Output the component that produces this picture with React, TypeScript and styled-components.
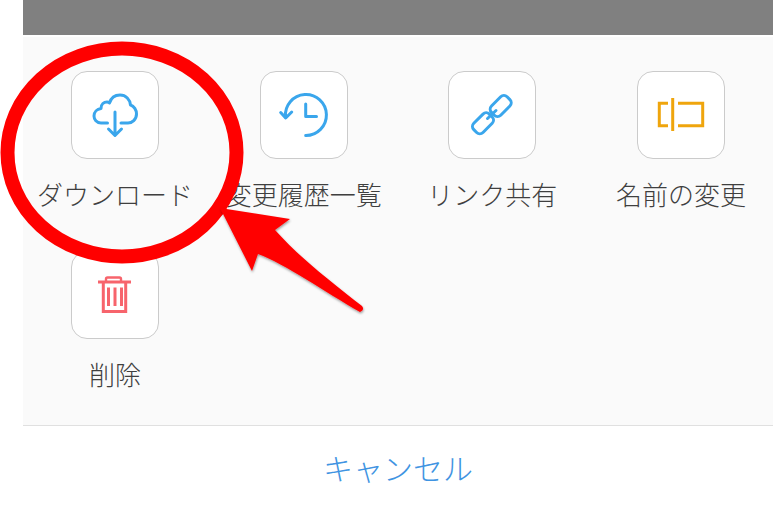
import React from "react";
import styled, { createGlobalStyle } from "styled-components";

const GlobalStyle = createGlobalStyle`
  html, body { margin: 0; padding: 0; background: #ffffff; }
  body { font-family: "Noto Sans CJK JP", "Noto Sans", sans-serif; }
`;

const Page = styled.div`
  position: relative;
  width: 773px;
  height: 505px;
  overflow: hidden;
  padding-left: 23px;
  box-sizing: border-box;
  background: #ffffff;
`;

const TopBar = styled.div`
  height: 35px;
  background: #808080;
  margin-bottom: 2px;
`;

const ActionPanel = styled.div`
  display: grid;
  grid-template-columns: repeat(4, 88px);
  justify-content: space-between;
  row-gap: 36px;
  padding: 34px 48px 30px;
  background: #fafafa;
`;

const Action = styled.div`
  display: flex;
  flex-direction: column;
  align-items: center;
  width: 88px;
`;

const Tile = styled.div`
  width: 88px;
  height: 88px;
  box-sizing: border-box;
  border: 1px solid #cbcbcb;
  border-radius: 16px;
  background: #ffffff;
  flex: none;
`;

const TileIcon = styled.svg<{ $color: string }>`
  display: block;
  width: 88px;
  height: 88px;
  margin: -1px;
  fill: none;
  stroke: ${(p) => p.$color};
  stroke-width: 3;
`;

const Label = styled.div`
  margin-top: 15px;
  height: 41px;
  line-height: 40px;
  font-size: 26px;
  font-weight: 300;
  color: #3f3f3f;
  white-space: nowrap;
`;

const CancelBar = styled.div`
  border-top: 1px solid #e0e0e0;
  height: 79px;
  display: flex;
  justify-content: center;
  padding-top: 19px;
  box-sizing: border-box;
`;

const CancelText = styled.div`
  font-size: 30px;
  line-height: 44px;
  font-weight: 300;
  color: #3f94e2;
`;

const Annotation = styled.svg`
  position: absolute;
  left: 0;
  top: 0;
  width: 773px;
  height: 505px;
  pointer-events: none;
`;

const BLUE = "#3aa6ec";
const AMBER = "#efa50d";
const RED = "#f7646c";

const CloudIcon = () => (
  <TileIcon viewBox="0 0 88 88" $color={BLUE} strokeLinecap="round" strokeLinejoin="round">
    <path d="M36.5 52H30C25.5 52 23 48.5 23 45C23 41 26 38 30 37.5C30 33 33 31 36 31C37 31 38 31.5 38.5 32C40 27 44 24 49 24C55 24 59 28.5 59.5 34C63 35 65.5 39 65.5 43C65.5 48.5 61 52 57 52H50" />
    <path d="M44 41V64M37.5 58L44 64.5L50.5 58" />
  </TileIcon>
);

const HistoryIcon = () => (
  <TileIcon viewBox="0 0 88 88" $color={BLUE} strokeLinecap="round" strokeLinejoin="round">
    <path d="M25.5 46A20.5 20.5 0 1 1 45.7 64.5" />
    <path d="M20.7 41.5L25.7 47L31.7 41" />
    <path d="M45.7 33V45.5H56.5" />
  </TileIcon>
);

const LinkIcon = () => (
  <TileIcon viewBox="0 0 88 88" $color={BLUE} strokeLinecap="round" strokeLinejoin="round">
    <rect x="41.7" y="28.5" width="22" height="13" rx="4.5" transform="rotate(-45 52.7 35)" />
    <rect x="24" y="45.8" width="22" height="13" rx="4.5" transform="rotate(-45 35 52.3)" />
    <path d="M39.5 47.5L48 39.5" />
  </TileIcon>
);

const RenameIcon = () => (
  <TileIcon viewBox="0 0 88 88" $color={AMBER}>
    <path d="M31 32.3H22.3V54.8H31" />
    <path d="M35.7 27V60" />
    <path d="M41 32.3H65.7V54.8H41" />
  </TileIcon>
);

const TrashIcon = () => (
  <TileIcon viewBox="0 0 88 88" $color={RED}>
    <path d="M27 31H60" />
    <path d="M35 30.5V28Q35 26.5 36.5 26.5H48.5Q50 26.5 50 28V30.5" strokeWidth="2.4" />
    <path d="M32.3 31V60.5H54.7V31" />
    <path d="M37.5 36.5V55M44 36.5V55M50.5 36.5V55" />
  </TileIcon>
);

const actions = [
  { label: "ダウンロード", icon: <CloudIcon /> },
  { label: "変更履歴一覧", icon: <HistoryIcon /> },
  { label: "リンク共有", icon: <LinkIcon /> },
  { label: "名前の変更", icon: <RenameIcon /> },
  { label: "削除", icon: <TrashIcon /> },
];

export default function App() {
  return (
    <Page>
      <GlobalStyle />
      <TopBar />
      <ActionPanel>
        {actions.map((a) => (
          <Action key={a.label}>
            <Tile>{a.icon}</Tile>
            <Label>{a.label}</Label>
          </Action>
        ))}
      </ActionPanel>
      <CancelBar>
        <CancelText>キャンセル</CancelText>
      </CancelBar>
      <Annotation viewBox="0 0 773 505">
        <defs>
          <filter id="arrowShadow" x="-10%" y="-10%" width="125%" height="125%">
            <feDropShadow dx="0.5" dy="1.5" stdDeviation="1" floodColor="#000000" floodOpacity="0.4" />
          </filter>
        </defs>
        <ellipse cx="122" cy="152.5" rx="114.5" ry="104" fill="none" stroke="#ff0000" strokeWidth="14" />
        <path
          d="M220 208L290 219L275 230C300 258 335 285 362 306Q365 310 360 312C325 292 285 264 258 254L252 271Z"
          fill="#ff0000"
          filter="url(#arrowShadow)"
        />
      </Annotation>
    </Page>
  );
}
